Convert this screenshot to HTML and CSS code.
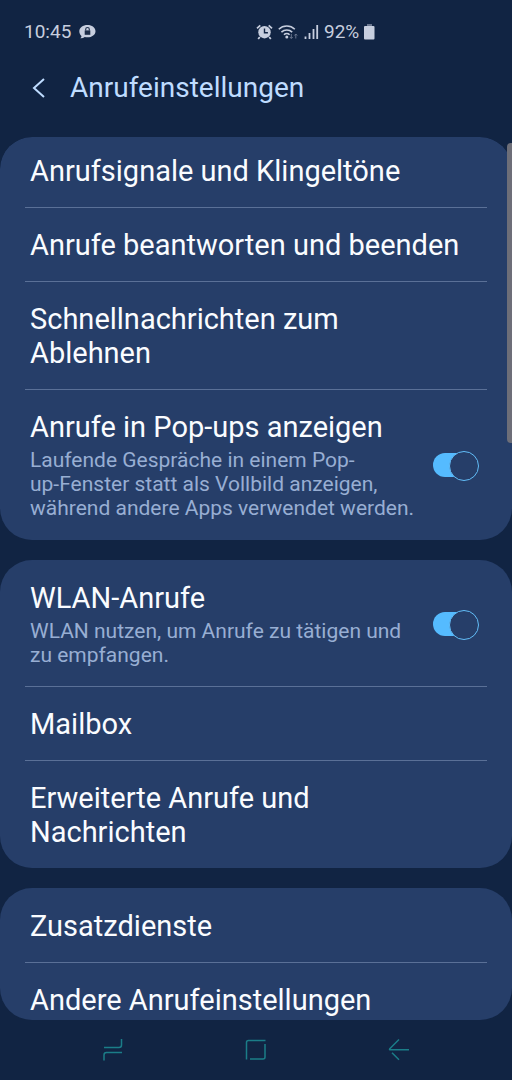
FILE: index.html
```html
<!DOCTYPE html>
<html lang="de">
<head>
<meta charset="utf-8">
<meta name="viewport" content="width=device-width, initial-scale=1">
<title>Anrufeinstellungen</title>
<link rel="stylesheet" href="styles.css">
</head>
<body>
<div class="screen">
  <div class="status">
    <div class="status-group">
      <span>10:45</span>
      <svg class="chat" width="17" height="14" viewBox="0 0 17 14" aria-hidden="true">
        <path fill="#c7cede" d="M8.500 0C13 0 16.500 2.700 16.500 6.200S13 12.300 8.500 12.300c-1 0-2-.1-2.800-.3C4.500 13 3 13.400 1.300 13.200c.8-.6 1.200-1.400 1.200-2.300C1 9.700.3 8 .3 6.200.3 2.700 4 0 8.500 0z"/>
        <rect x="5.700" y="5.400" width="5.600" height="4.400" fill="#1c2c48"/>
        <path d="M6.700 5.600V4.300a1.800 1.800 0 0 1 3.600 0v1.300" fill="none" stroke="#1c2c48" stroke-width="1.100"/>
      </svg>
    </div>
    <div class="status-group status-right">
      <svg width="17" height="16" viewBox="0 0 17 16" aria-hidden="true">
        <circle cx="8.500" cy="8.200" r="6.200" fill="#c7cede"/>
        <path d="M1 4.300 4.300 1.300M16 4.300 12.700 1.300M3.800 13 2.200 15M13.200 13l1.600 2" stroke="#c7cede" stroke-width="1.800" fill="none"/>
        <path d="M8.500 4.500v4.200h3.400" stroke="#112443" stroke-width="1.400" fill="none"/>
      </svg>
      <svg width="21" height="16" viewBox="0 0 21 16" aria-hidden="true">
        <g fill="none" stroke="#c7cede" stroke-width="1.600">
          <path d="M.8 5.200a11.500 11.500 0 0 1 16 0M3.400 8.100a7.800 7.800 0 0 1 10.800 0M6 10.700a4 4 0 0 1 5.600 0"/>
        </g>
        <circle cx="8.800" cy="13" r="1.500" fill="#c7cede"/>
        <path d="M13.300 10v4.500M11.900 13l1.400 1.500 1.400-1.500M17.800 14.500V10M16.400 11.500 17.800 10l1.400 1.500" fill="none" stroke="#69768e" stroke-width="1"/>
      </svg>
      <svg width="15" height="16" viewBox="0 0 15 16" aria-hidden="true">
        <path d="M1.500 12.500V15M5.500 9V15M9.500 5V15M13.200 1V15" stroke="#c7cede" stroke-width="1.800"/>
      </svg>
      <span>92%</span>
      <svg width="11" height="16" viewBox="0 0 11 16" aria-hidden="true">
        <path d="M3 0h5v2H3z" fill="#69768e"/><rect y="2" width="10.500" height="13.500" rx="1" fill="#c7cede"/>
      </svg>
    </div>
  </div>

  <header class="header">
    <button class="back" type="button" aria-label="Zurück">
      <svg width="14" height="20" viewBox="0 0 14 20"><path d="M12 1 2 10l10 9" fill="none" stroke="#bfdcff" stroke-width="2"/></svg>
    </button>
    <h1 class="heading">Anrufeinstellungen</h1>
  </header>

  <main class="list">
    <section class="card card-scrolled">
      <a class="row row-link" href="#"><span class="title">Anrufsignale und Klingeltöne</span></a>
      <a class="row row-link" href="#"><span class="title">Anrufe beantworten und beenden</span></a>
      <a class="row row-link" href="#"><span class="title">Schnellnachrichten zum Ablehnen</span></a>
      <label class="row">
        <span class="text">
          <span class="title">Anrufe in Pop-ups anzeigen</span>
          <span class="sub">Laufende Gespräche in einem Pop-<br>up-Fenster statt als Vollbild anzeigen, während andere Apps verwendet werden.</span>
        </span>
        <input class="switch" type="checkbox" role="switch" checked>
      </label>
    </section>
    <section class="card">
      <label class="row">
        <span class="text">
          <span class="title">WLAN-Anrufe</span>
          <span class="sub">WLAN nutzen, um Anrufe zu tätigen und zu empfangen.</span>
        </span>
        <input class="switch" type="checkbox" role="switch" checked>
      </label>
      <a class="row row-link" href="#"><span class="title">Mailbox</span></a>
      <a class="row row-link" href="#"><span class="title">Erweiterte Anrufe und Nachrichten</span></a>
    </section>
    <section class="card">
      <a class="row row-link" href="#"><span class="title">Zusatzdienste</span></a>
      <a class="row row-link" href="#"><span class="title">Andere Anrufeinstellungen</span></a>
    </section>
  </main>

  <nav class="nav">
    <button type="button" aria-label="Letzte Apps">
      <svg width="22" height="24" viewBox="0 0 22 24"><path d="M2 9.500h15q2.500 0 2.500-2.500V1M20 14.500H4.500Q2 14.500 2 17v5.500"/></svg>
    </button>
    <button type="button" aria-label="Startseite">
      <svg width="22" height="24" viewBox="0 0 22 24"><path d="M1.500 21.500V4.500q0-2 2-2H20.500M20 6v13q0 2-2 2H5"/></svg>
    </button>
    <button type="button" aria-label="Zurück">
      <svg width="22" height="24" viewBox="0 0 22 24"><path d="M11 1.500 2 10.500q-1 1.200 0 1.200H21M4 14.700l7 7"/></svg>
    </button>
  </nav>
  <div class="scrollbar"></div>
</div>
</body>
</html>
```
FILE: styles.css
```css
* { box-sizing: border-box; }

body {
  margin: 0;
  background: #112443;
  color: #fafcff;
  font-family: Roboto, "Noto Sans", sans-serif;
}

button {
  padding: 0;
  border: 0;
  background: none;
}

svg { display: block; }

.screen {
  position: relative;
  display: flex;
  flex-direction: column;
  height: 100vh;
}

.status {
  display: grid;
  grid-template-columns: 1fr 1fr;
  padding: 20px 24px 0;
  color: #c7cede;
  font-size: 19px;
  line-height: 24px;
}

.status-group {
  display: flex;
  align-items: center;
  gap: 8px;
}

.status-right { gap: 5px; }

.header {
  display: flex;
  align-items: center;
  gap: 24px;
  padding: 26px 32px 31px;
}

.heading {
  margin: 0;
  color: #bfdcff;
  font-size: 28px;
  font-weight: 400;
  line-height: 36px;
}

.list {
  flex: 1;
  min-height: 0;
  display: flex;
  flex-direction: column;
  gap: 20px;
  border-radius: 32px;
  overflow: hidden;
}

.card {
  flex: none;
  padding: 1px 25px 0;
  border-radius: 32px;
  background: #263e69;
}

.row {
  display: flex;
  align-items: center;
  justify-content: space-between;
  gap: 16px;
  padding: 20px 8px 19px 5px;
  border-bottom: 1px solid #5a7097;
  color: inherit;
  text-decoration: none;
}

.row-link { padding-right: 24px; }

.row:last-child { border-bottom: 0; }

.card-scrolled {
  padding-top: 0;
  padding-bottom: 1px;
}

.card-scrolled .row:first-child { padding-top: 17px; }

.title {
  display: block;
  font-size: 29px;
  line-height: 34px;
}

.sub {
  display: block;
  margin-top: 4px;
  color: #98aed3;
  font-size: 21px;
  line-height: 24px;
}

.switch {
  appearance: none;
  position: relative;
  flex: none;
  width: 46px;
  height: 28px;
  margin: 0;
}

.switch::before {
  content: "";
  position: absolute;
  inset: 2px 8px 2px 0;
  border-radius: 12px;
  background: #55bbff;
}

.switch::after {
  content: "";
  position: absolute;
  top: 0;
  right: 0;
  width: 28px;
  height: 28px;
  border: 1px solid #62bdf8;
  border-radius: 50%;
  background: #263e69;
}

.nav {
  display: grid;
  grid-template-columns: repeat(3, 28%);
  justify-content: center;
  justify-items: center;
  align-items: center;
  height: 60px;
}

.nav path {
  fill: none;
  stroke: #1b7d88;
  stroke-width: 1.5;
}

.scrollbar {
  position: absolute;
  top: 143px;
  right: 0;
  width: 5px;
  height: 300px;
  border-radius: 4px 0 0 4px;
  background: #6d6e78;
}
```
